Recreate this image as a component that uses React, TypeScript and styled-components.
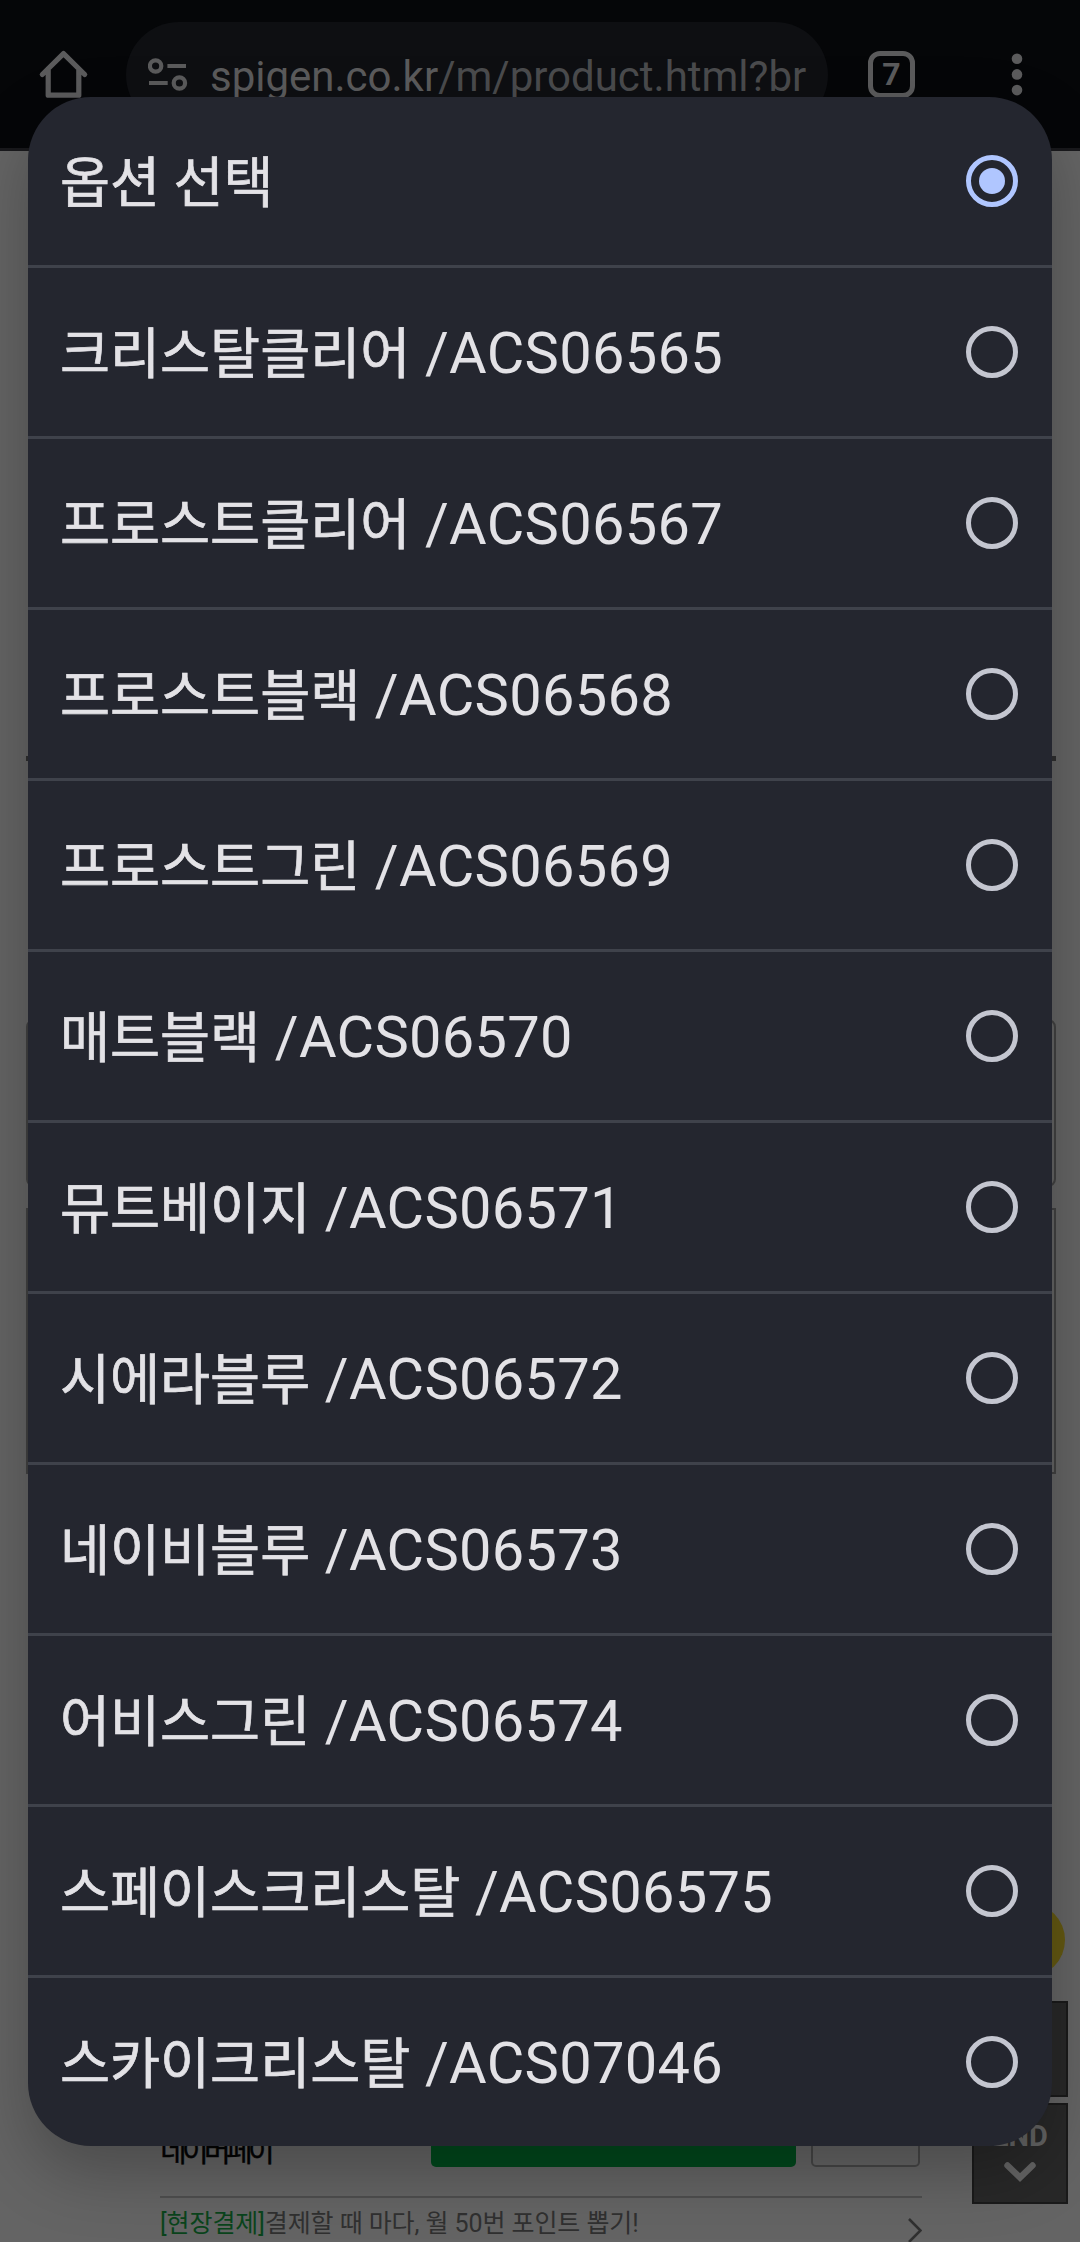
import React from "react";
import styled, { createGlobalStyle } from "styled-components";

const GlobalStyle = createGlobalStyle`
  * { box-sizing: border-box; }
  body { margin: 0; background: #646464; font-family: Roboto, "Noto Sans CJK KR", sans-serif; }
`;

const Screen = styled.main`
  position: relative;
  width: 1080px;
  height: 2242px;
  overflow: hidden;
  display: flex;
  flex-direction: column;
  background: #646464;
`;

const Toolbar = styled.header`
  flex: none;
  display: flex;
  align-items: flex-start;
  height: 151px;
  padding-top: 22px;
  background: #050608;
  border-bottom: 3px solid #19191c;
  color: #5b5b5c;
`;

const ToolbarIcon = styled.svg<{ $left: number }>`
  flex: none;
  display: block;
  margin: 28px 0 0 ${(p) => p.$left}px;
  overflow: visible;
`;

const AddressBar = styled.div`
  flex: none;
  display: flex;
  align-items: center;
  width: 702px;
  height: 106px;
  margin-left: 38px;
  padding-left: 22px;
  border-radius: 53px;
  background: #0e0f12;
`;

const Url = styled.span`
  margin-left: 22px;
  padding-top: 4px;
  font-size: 42px;
  line-height: 50px;
  white-space: nowrap;
  color: #4a4b4d;
`;

const Domain = styled.span`
  color: #5b5b5c;
`;

const TabCount = styled.div`
  flex: none;
  width: 47px;
  height: 47px;
  margin: 29px 0 0 40px;
  border: 5px solid #5b5b5c;
  border-radius: 12px;
  font-size: 32px;
  font-weight: 700;
  line-height: 37px;
  text-align: center;
`;

const Page = styled.section`
  flex: 1;
  display: flex;
  flex-direction: column;
  align-items: stretch;
  padding: 605px 24px 0 26px;
`;

const HeavyRule = styled.div`
  flex: none;
  height: 5px;
  background: #2e2e2e;
`;

const Field = styled.div<{ $gap: number; $height: number; $radius: number }>`
  flex: none;
  height: ${(p) => p.$height}px;
  margin-top: ${(p) => p.$gap}px;
  border: 2px solid #414141;
  border-radius: ${(p) => p.$radius}px;
`;

const PayBlock = styled.div`
  flex: none;
  width: 762px;
  margin: 597px 0 0 134px;
`;

const PayRow = styled.div`
  display: flex;
  height: 127px;
  padding-bottom: 29px;
  align-items: flex-end;
  border-bottom: 2px solid #4e4e4e;
`;

const PayName = styled.span`
  width: 271px;
  font-size: 29px;
  line-height: 30px;
  letter-spacing: -4.7px;
  -webkit-text-stroke: 0.4px #030303;
  color: #030303;
`;

const PayButton = styled.div`
  width: 365px;
  height: 88px;
  border-radius: 5px;
  background: #00481c;
`;

const WishButton = styled.div`
  width: 109px;
  height: 88px;
  margin-left: 15px;
  border: 2px solid #464646;
  border-radius: 5px;
`;

const Notice = styled.div`
  display: flex;
  justify-content: space-between;
  align-items: flex-start;
  height: 44px;
  padding-top: 8px;
  font-size: 25px;
  line-height: 36px;
  letter-spacing: -0.08px;
  white-space: nowrap;
  color: #303030;
`;

const NoticeTag = styled.span`
  color: #0a441c;
`;

const NoticeArrow = styled.svg`
  display: block;
  margin-top: 12px;
`;

const ChatBubble = styled.div`
  position: absolute;
  left: 991px;
  top: 1903px;
  width: 74px;
  height: 74px;
  border-radius: 50%;
  background: #635812;
`;

const QuickNav = styled.nav`
  position: absolute;
  left: 972px;
  top: 2001px;
  width: 96px;
  display: flex;
  flex-direction: column;
  gap: 6px;
`;

const QuickButton = styled.div<{ $height: number }>`
  display: flex;
  flex-direction: column;
  align-items: center;
  height: ${(p) => p.$height}px;
  padding-top: 14px;
  border: 2px solid #1a1a1a;
  background: #282828;
  color: #646464;
  font-size: 29px;
  line-height: 34px;
  font-weight: 700;
`;

const QuickArrow = styled.svg`
  display: block;
  margin-top: 8px;
`;

const Overlay = styled.div`
  position: absolute;
  inset: 0;
  padding: 97px 28px 96px;
`;

const Dialog = styled.div`
  height: 2049px;
  display: flex;
  flex-direction: column;
  overflow: hidden;
  border-radius: 63px;
  background: #24262f;
  box-shadow: 0 26px 64px rgba(0, 0, 0, 0.26);
`;

const OptionRow = styled.label`
  flex: none;
  display: flex;
  align-items: center;
  justify-content: space-between;
  height: 171px;
  padding: 0 34px 0 32px;
  border-bottom: 3px solid #3f424b;
  &:last-child {
    height: 168px;
    border-bottom: 0;
  }
`;

const OptionText = styled.span`
  padding-top: 3px;
  font-size: 57.75px;
  line-height: 68px;
  letter-spacing: 0.3px;
  white-space: pre;
  color: #e3e2e6;
`;

const Korean = styled.span`
  font-size: 54.4px;
  letter-spacing: 0;
  -webkit-text-stroke: 0.7px #e3e2e6;
`;

const Radio = styled.span<{ $on: boolean }>`
  display: grid;
  place-items: center;
  width: 52px;
  height: 52px;
  border: 5px solid ${(p) => (p.$on ? "#b0c6ff" : "#c4c6d0")};
  border-radius: 50%;
  &::after {
    content: "";
    width: 26px;
    height: 26px;
    border-radius: 50%;
    background: ${(p) => (p.$on ? "#b0c6ff" : "transparent")};
  }
`;

const options: { name: string; code?: string }[] = [
  { name: "옵션 선택" },
  { name: "크리스탈클리어", code: "ACS06565" },
  { name: "프로스트클리어", code: "ACS06567" },
  { name: "프로스트블랙", code: "ACS06568" },
  { name: "프로스트그린", code: "ACS06569" },
  { name: "매트블랙", code: "ACS06570" },
  { name: "뮤트베이지", code: "ACS06571" },
  { name: "시에라블루", code: "ACS06572" },
  { name: "네이비블루", code: "ACS06573" },
  { name: "어비스그린", code: "ACS06574" },
  { name: "스페이스크리스탈", code: "ACS06575" },
  { name: "스카이크리스탈", code: "ACS07046" },
];

export default function App() {
  return (
    <>
      <GlobalStyle />
      <Screen>
        <Toolbar>
          <ToolbarIcon $left={39} width="49" height="49" viewBox="0 0 49 49" fill="none" stroke="currentColor" strokeWidth="5.2" strokeLinecap="round" strokeLinejoin="round">
            <path d="M3.3 24.5 24.5 3.6 45.7 24.5M9.2 20V45.2H39.8V20" />
          </ToolbarIcon>
          <AddressBar>
            <svg width="40" height="36" viewBox="0 0 40 36" fill="none" stroke="#5b5b5c" strokeWidth="4.2">
              <circle cx="7.6" cy="9" r="5.7" />
              <path d="M19.4 9H38M1 26H19.7" />
              <circle cx="31.4" cy="26" r="5.7" />
            </svg>
            <Url>
              <Domain>spigen.co.kr</Domain>/m/product.html?br
            </Url>
          </AddressBar>
          <TabCount>7</TabCount>
          <ToolbarIcon $left={96} width="12" height="49" viewBox="0 0 12 49" fill="currentColor">
            <circle cx="6" cy="8.7" r="5.3" />
            <circle cx="6" cy="24.4" r="5.3" />
            <circle cx="6" cy="40.1" r="5.3" />
          </ToolbarIcon>
        </Toolbar>

        <Page>
          <HeavyRule />
          <Field $gap={258} $height={168} $radius={8} />
          <Field $gap={21} $height={266} $radius={0} />
          <PayBlock>
            <PayRow>
              <PayName>네이버페이</PayName>
              <PayButton />
              <WishButton />
            </PayRow>
            <Notice>
              <span>
                <NoticeTag>[현장결제]</NoticeTag>결제할 때 마다, 월 50번 포인트 뽑기!
              </span>
              <NoticeArrow width="14" height="26" viewBox="0 0 14 26" fill="none" stroke="#303030" strokeWidth="2.6">
                <path d="M1 1 12.5 12.5 1 24" />
              </NoticeArrow>
            </Notice>
          </PayBlock>
        </Page>

        <ChatBubble />
        <QuickNav>
          <QuickButton $height={96}>TOP</QuickButton>
          <QuickButton $height={101}>
            END
            <QuickArrow width="32" height="22" viewBox="0 0 32 22" fill="none" stroke="currentColor" strokeWidth="6.4" strokeLinecap="round">
              <path d="M3.5 4.5 16 16.5 28.5 4.5" />
            </QuickArrow>
          </QuickButton>
        </QuickNav>

        <Overlay>
          <Dialog role="dialog">
            {options.map((option, index) => (
              <OptionRow key={option.name}>
                <OptionText>
                  <Korean>{option.name}</Korean>
                  {option.code ? ` /${option.code}` : null}
                </OptionText>
                <Radio $on={index === 0} />
              </OptionRow>
            ))}
          </Dialog>
        </Overlay>
      </Screen>
    </>
  );
}
